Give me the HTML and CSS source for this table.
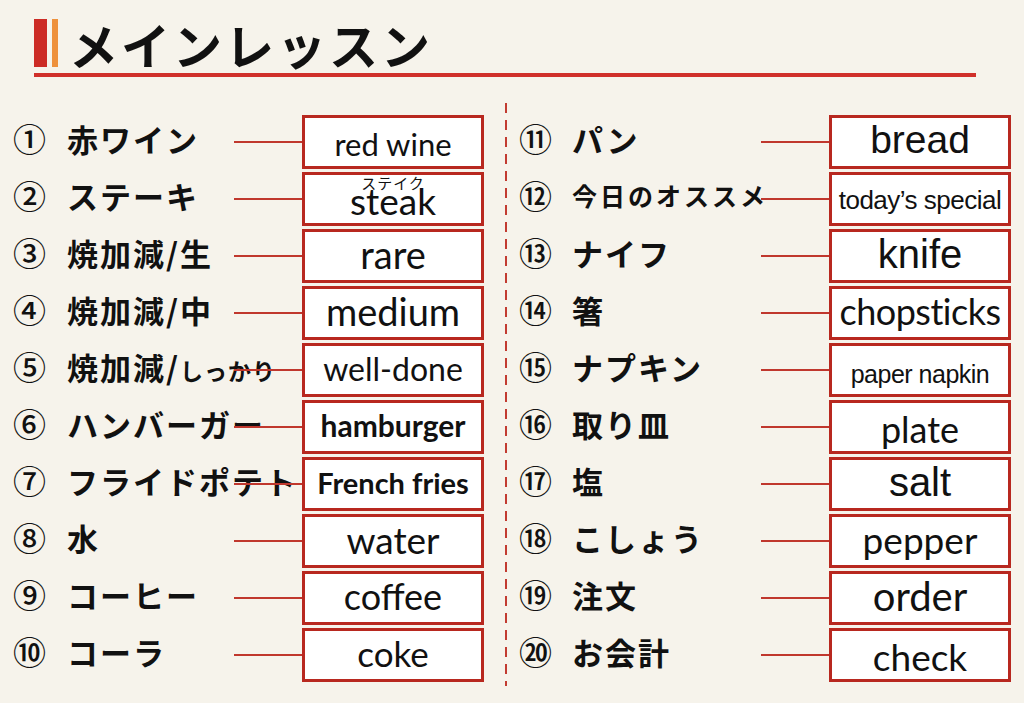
FILE: index.html
```html
<!DOCTYPE html>
<html lang="ja">
<head>
  <meta charset="UTF-8">
  <meta name="viewport" content="width=device-width, initial-scale=1.0">
  <title>メインレッスン</title>
  <link rel="stylesheet" href="styles.css">
</head>
<body>
  <!-- Title -->
  <header class="title">
    <div class="title-row">
      <span class="bar bar-red"></span>
      <span class="bar bar-orange"></span>
      <h1>メインレッスン</h1>
    </div>
    <div class="title-line"></div>
  </header>

  <main class="lesson">
    <!-- Left: 1-10 -->
    <section class="col col-left">
      <div class="row"><span class="num">①</span><span class="jp">赤ワイン</span><div class="box fs31 mid">red wine</div></div>
      <div class="row"><span class="num">②</span><span class="jp">ステーキ</span><div class="box fs37 mid"><span class="ruby">ステイク</span>steak</div></div>
      <div class="row"><span class="num">③</span><span class="jp">焼加減/生</span><div class="box fs38">rare</div></div>
      <div class="row"><span class="num">④</span><span class="jp">焼加減/中</span><div class="box fs38">medium</div></div>
      <div class="row"><span class="num">⑤</span><span class="jp">焼加減/<small>しっかり</small></span><div class="box fs32">well-done</div></div>
      <div class="row"><span class="num">⑥</span><span class="jp">ハンバーガー</span><div class="box fs30 bold">hamburger</div></div>
      <div class="row"><span class="num">⑦</span><span class="jp">フライドポテト</span><div class="box fs29 bold">French fries</div></div>
      <div class="row"><span class="num">⑧</span><span class="jp">水</span><div class="box fs37">water</div></div>
      <div class="row"><span class="num">⑨</span><span class="jp">コーヒー</span><div class="box fs36">coffee</div></div>
      <div class="row"><span class="num">⑩</span><span class="jp">コーラ</span><div class="box fs35">coke</div></div>
    </section>

    <div class="divider"></div>

    <!-- Right: 11-20 -->
    <section class="col col-right">
      <div class="row"><span class="num">⑪</span><span class="jp">パン</span><div class="box helv fs39">bread</div></div>
      <div class="row"><span class="num">⑫</span><span class="jp jp-small">今日のオススメ</span><div class="box helv fs26 tight mid">today’s special</div></div>
      <div class="row"><span class="num">⑬</span><span class="jp">ナイフ</span><div class="box helv fs40">knife</div></div>
      <div class="row"><span class="num">⑭</span><span class="jp">箸</span><div class="box fs36 tight">chopsticks</div></div>
      <div class="row"><span class="num">⑮</span><span class="jp">ナプキン</span><div class="box helv fs25 low tight">paper napkin</div></div>
      <div class="row"><span class="num">⑯</span><span class="jp">取り皿</span><div class="box fs36 mid">plate</div></div>
      <div class="row"><span class="num">⑰</span><span class="jp">塩</span><div class="box helv fs40">salt</div></div>
      <div class="row"><span class="num">⑱</span><span class="jp">こしょう</span><div class="box fs37">pepper</div></div>
      <div class="row"><span class="num">⑲</span><span class="jp">注文</span><div class="box fs40">order</div></div>
      <div class="row"><span class="num">⑳</span><span class="jp">お会計</span><div class="box fs37 mid">check</div></div>
    </section>
  </main>
</body>
</html>
```

FILE: styles.css
```css
body {
  margin: 0;
  background: #f6f3eb;
  color: #111;
  font-family: "Noto Sans CJK JP", "Noto Sans", sans-serif;
  width: 1024px;
  height: 703px;
  overflow: hidden;
}

/* Title */
.title {
  padding: 19px 0 0 34px;
}

.title-row {
  display: flex;
  align-items: center;
  height: 48px;
}

.bar {
  display: block;
  height: 48px;
}

.bar-red {
  width: 13px;
  background: #cc2b25;
}

.bar-orange {
  width: 6px;
  margin-left: 5px;
  background: #ee913c;
}

h1 {
  margin: 0 0 0 11px;
  font-size: 49px;
  font-weight: 700;
  letter-spacing: 3px;
  line-height: 1;
}

.title-line {
  width: 942px;
  height: 4px;
  margin-top: 6px;
  background: #d0302a;
}

/* Lesson grid */
.lesson {
  display: grid;
  grid-template-columns: 505px 2px 1fr;
  margin-top: 26px;
  height: 583px;
}

.divider {
  background: repeating-linear-gradient(to bottom, #c23b31 0 10px, transparent 10px 17px);
}

.col {
  display: flex;
  flex-direction: column;
  gap: 3px;
  padding-top: 12px;
}

.col-left {
  padding-left: 13px;
}

.col-right {
  padding-left: 12px;
}

.row {
  display: grid;
  grid-template-columns: 54px 235px 182px;
  align-items: center;
  height: 54px;
}

.col-right .row {
  grid-template-columns: 53px 257px 182px;
}

.num {
  font-size: 33px;
  font-weight: 500;
  line-height: 1;
  padding-bottom: 7px;
}

.jp {
  font-size: 31px;
  font-weight: 700;
  letter-spacing: 2px;
  line-height: 1;
  white-space: nowrap;
  padding-bottom: 7px;
}

.jp small {
  font-size: 23px;
  letter-spacing: 1px;
}

.jp-small {
  font-size: 25px;
  letter-spacing: 3px;
}

/* Answer boxes */
.box {
  position: relative;
  box-sizing: border-box;
  height: 54px;
  border: 3px solid #b8281f;
  background: #fff;
  display: flex;
  align-items: center;
  justify-content: center;
  padding-bottom: 4px;
  font-family: Lato, "Open Sans", sans-serif;
  color: #111;
  white-space: nowrap;
}

/* connector line, drawn over the label */
.box::before {
  content: "";
  position: absolute;
  right: 100%;
  top: 23px;
  width: 68px;
  height: 2px;
  margin-right: 3px;
  background: #c0372d;
}

.box.helv {
  font-family: "Liberation Sans", Arial, sans-serif;
}

.box.bold {
  font-weight: 700;
}

.box.tight {
  letter-spacing: -0.5px;
}

.box.mid {
  padding-bottom: 0;
  padding-top: 3px;
}

.box.low {
  padding-bottom: 0;
  padding-top: 8px;
}

.ruby {
  position: absolute;
  top: 0;
  left: 0;
  right: 0;
  text-align: center;
  font-family: "Noto Sans CJK JP", sans-serif;
  font-size: 15px;
  line-height: 15px;
  letter-spacing: 1px;
}

.fs25 { font-size: 25px; }
.fs26 { font-size: 26px; }
.fs29 { font-size: 29px; }
.fs30 { font-size: 30px; }
.fs31 { font-size: 31px; }
.fs32 { font-size: 32px; }
.fs35 { font-size: 35px; }
.fs36 { font-size: 36px; }
.fs37 { font-size: 37px; }
.fs38 { font-size: 38px; }
.fs39 { font-size: 39px; }
.fs40 { font-size: 40px; }
```
